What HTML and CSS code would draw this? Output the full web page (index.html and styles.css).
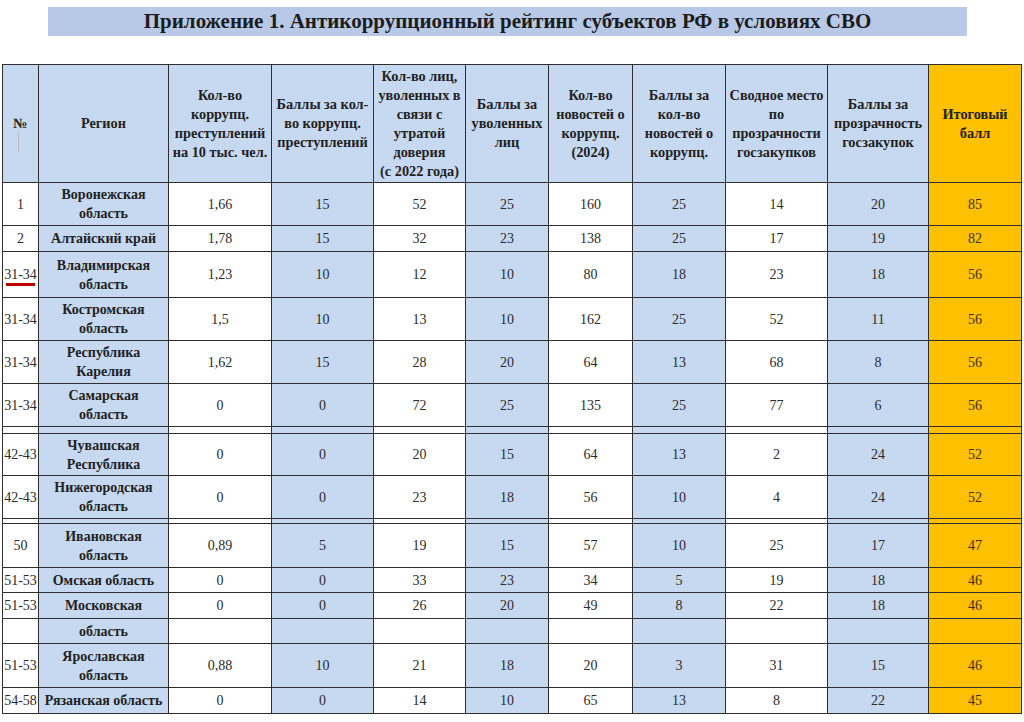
FILE: index.html
```html
<!DOCTYPE html>
<html lang="ru">
<head>
<meta charset="utf-8">
<title>Приложение 1</title>
<link rel="stylesheet" href="styles.css">
</head>
<body>
<div class="page">
  <h1 class="title">Приложение 1. Антикоррупционный рейтинг субъектов РФ в условиях СВО</h1>
  <table class="rating">
    <colgroup>
      <col class="c-num"><col class="c-reg"><col class="c3"><col class="c4"><col class="c5"><col class="c6"><col class="c7"><col class="c8"><col class="c9"><col class="c10"><col class="c11">
    </colgroup>
    <thead>
      <tr class="head">
        <th class="b numhead">№</th>
        <th class="b">Регион</th>
        <th class="b">Кол-во<br>коррупц.<br>преступлений<br>на 10 тыс. чел.</th>
        <th class="b">Баллы за кол-<br>во коррупц.<br>преступлений</th>
        <th class="b">Кол-во лиц,<br>уволенных в<br>связи с<br>утратой<br>доверия<br>(с 2022 года)</th>
        <th class="b">Баллы за<br>уволенных<br>лиц</th>
        <th class="b">Кол-во<br>новостей о<br>коррупц.<br>(2024)</th>
        <th class="b">Баллы за<br>кол-во<br>новостей о<br>коррупц.</th>
        <th class="b">Сводное место<br>по<br>прозрачности<br>госзакупков</th>
        <th class="b">Баллы за<br>прозрачность<br>госзакупок</th>
        <th class="o">Итоговый<br>балл</th>
      </tr>
    </thead>
    <tbody>
      <tr class="r43">
        <td class="w">1</td><td class="b reg">Воронежская<br>область</td><td class="w">1,66</td><td class="b">15</td><td class="w">52</td><td class="b">25</td><td class="w">160</td><td class="b">25</td><td class="w">14</td><td class="b">20</td><td class="o">85</td>
      </tr>
      <tr class="r26">
        <td class="w">2</td><td class="b reg">Алтайский край</td><td class="w">1,78</td><td class="b">15</td><td class="w">32</td><td class="b">23</td><td class="w">138</td><td class="b">25</td><td class="w">17</td><td class="b">19</td><td class="o">82</td>
      </tr>
      <tr class="r46">
        <td class="w"><span class="marked">31-34</span></td><td class="b reg">Владимирская<br>область</td><td class="w">1,23</td><td class="b">10</td><td class="w">12</td><td class="b">10</td><td class="w">80</td><td class="b">18</td><td class="w">23</td><td class="b">18</td><td class="o">56</td>
      </tr>
      <tr class="r43">
        <td class="w">31-34</td><td class="b reg nb">Костромская<br>область</td><td class="w">1,5</td><td class="b nb">10</td><td class="w">13</td><td class="b nb">10</td><td class="w">162</td><td class="b nb">25</td><td class="w">52</td><td class="b nb">11</td><td class="o nb">56</td>
      </tr>
      <tr class="r43">
        <td class="w">31-34</td><td class="b reg nb">Республика<br>Карелия</td><td class="w">1,62</td><td class="b nb">15</td><td class="w">28</td><td class="b nb">20</td><td class="w">64</td><td class="b nb">13</td><td class="w">68</td><td class="b nb">8</td><td class="o nb">56</td>
      </tr>
      <tr class="r43">
        <td class="w">31-34</td><td class="b reg">Самарская<br>область</td><td class="w">0</td><td class="b">0</td><td class="w">72</td><td class="b">25</td><td class="w">135</td><td class="b">25</td><td class="w">77</td><td class="b">6</td><td class="o">56</td>
      </tr>
      <tr class="gap7">
        <td class="w"></td><td class="b nb"></td><td class="w"></td><td class="b nb"></td><td class="w"></td><td class="b nb"></td><td class="w"></td><td class="b nb"></td><td class="w"></td><td class="b nb"></td><td class="o nb"></td>
      </tr>
      <tr class="r42">
        <td class="w">42-43</td><td class="b reg">Чувашская<br>Республика</td><td class="w">0</td><td class="b">0</td><td class="w">20</td><td class="b">15</td><td class="w">64</td><td class="b">13</td><td class="w">2</td><td class="b">24</td><td class="o">52</td>
      </tr>
      <tr class="r43">
        <td class="w">42-43</td><td class="b reg">Нижегородская<br>область</td><td class="w">0</td><td class="b">0</td><td class="w">23</td><td class="b">18</td><td class="w">56</td><td class="b">10</td><td class="w">4</td><td class="b">24</td><td class="o">52</td>
      </tr>
      <tr class="gap5">
        <td class="w"></td><td class="b nb"></td><td class="w"></td><td class="b nb"></td><td class="w"></td><td class="b nb"></td><td class="w"></td><td class="b nb"></td><td class="w"></td><td class="b nb"></td><td class="o nb"></td>
      </tr>
      <tr class="r44">
        <td class="w">50</td><td class="b reg nb">Ивановская<br>область</td><td class="w">0,89</td><td class="b nb">5</td><td class="w">19</td><td class="b nb">15</td><td class="w">57</td><td class="b nb">10</td><td class="w">25</td><td class="b nb">17</td><td class="o nb">47</td>
      </tr>
      <tr class="r25">
        <td class="w">51-53</td><td class="b reg">Омская область</td><td class="w">0</td><td class="b">0</td><td class="w">33</td><td class="b">23</td><td class="w">34</td><td class="b">5</td><td class="w">19</td><td class="b">18</td><td class="o">46</td>
      </tr>
      <tr class="r26">
        <td class="w">51-53</td><td class="b reg">Московская</td><td class="w">0</td><td class="b">0</td><td class="w">26</td><td class="b">20</td><td class="w">49</td><td class="b">8</td><td class="w">22</td><td class="b">18</td><td class="o">46</td>
      </tr>
      <tr class="r25">
        <td class="w"></td><td class="b reg">область</td><td class="w"></td><td class="b"></td><td class="w"></td><td class="b"></td><td class="w"></td><td class="b"></td><td class="w"></td><td class="b"></td><td class="o"></td>
      </tr>
      <tr class="r44">
        <td class="w">51-53</td><td class="b reg">Ярославская<br>область</td><td class="w">0,88</td><td class="b">10</td><td class="w">21</td><td class="b">18</td><td class="w">20</td><td class="b">3</td><td class="w">31</td><td class="b">15</td><td class="o">46</td>
      </tr>
      <tr class="r26">
        <td class="w">54-58</td><td class="b reg">Рязанская область</td><td class="w">0</td><td class="b">0</td><td class="w">14</td><td class="b">10</td><td class="w">65</td><td class="b">13</td><td class="w">8</td><td class="b">22</td><td class="o">45</td>
      </tr>
    </tbody>
  </table>
</div>
</body>
</html>
```

FILE: styles.css
```css
html, body {
  margin: 0;
  padding: 0;
  background: #ffffff;
}

.page {
  width: 1024px;
  height: 722px;
  padding-top: 7px;
  box-sizing: border-box;
  font-family: "Liberation Serif", "Times New Roman", serif;
  color: #262626;
}

.title {
  margin: 0 0 28px 48px;
  width: 919px;
  height: 29px;
  background: #b7c9e6;
  font-size: 21px;
  font-weight: bold;
  line-height: 29px;
  text-align: center;
  color: #1c1c1c;
}

.rating {
  margin-left: 2px;
  width: 1019px;
  table-layout: fixed;
  border-collapse: collapse;
  border: 1px solid #333;
}

.c-num { width: 36px; }
.c-reg { width: 130px; }
.c3 { width: 103px; }
.c4 { width: 102px; }
.c5 { width: 92px; }
.c6 { width: 83px; }
.c7 { width: 84px; }
.c8 { width: 93px; }
.c9 { width: 102px; }
.c10 { width: 101px; }
.c11 { width: 93px; }

.rating th,
.rating td {
  border: 1px solid #2e2e2e;
  padding: 0;
  text-align: center;
  vertical-align: middle;
  overflow: hidden;
  white-space: nowrap;
}

.rating th {
  font-size: 14.3px;
  line-height: 19px;
  font-weight: bold;
  color: #222;
}

.rating td {
  font-size: 14px;
  line-height: 19px;
  font-weight: normal;
  color: #2c2c2c;
}

.rating td.reg {
  font-weight: bold;
  color: #222;
}

.w { background: #ffffff; }
.b { background: #c6d9f1; }
.o { background: #ffc000; }
.rating td.o { color: #3b3116; }

.rating td.nb { border-bottom: none; }

.head { height: 118px; }
.r25 { height: 25px; }
.r26 { height: 26px; }
.r42 { height: 42px; }
.r43 { height: 43px; }
.r44 { height: 44px; }
.r46 { height: 46px; }
.gap7 { height: 7px; }
.gap5 { height: 5px; }
.gap7 td, .gap5 td { line-height: 0; font-size: 0; }

.numhead { position: relative; }
.numhead::after {
  content: "";
  position: absolute;
  left: 15px;
  top: 67px;
  width: 1px;
  height: 20px;
  background: #b9b9b9;
}

.marked { position: relative; }
.marked::after {
  content: "";
  position: absolute;
  left: 2px;
  right: 2px;
  bottom: -4px;
  height: 3px;
  background: #c00000;
}
```
